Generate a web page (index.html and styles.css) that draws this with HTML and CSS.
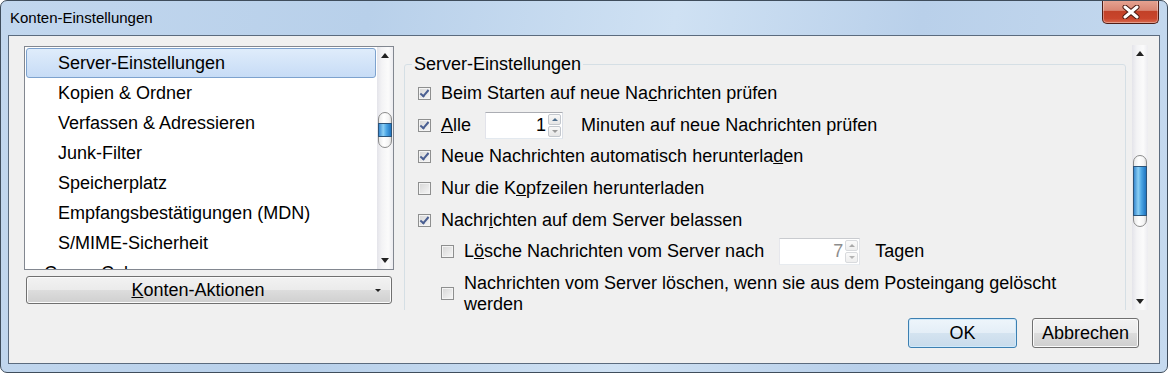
FILE: index.html
```html
<!DOCTYPE html>
<html lang="de">
<head>
  <meta charset="UTF-8" />
  <title>Konten-Einstellungen</title>
  <link rel="stylesheet" href="styles.css">
</head>
<body>
  <div class="window">
    <div class="titlebar">
      <span class="title">Konten-Einstellungen</span>
      <div class="close-btn">
        <svg width="22" height="14" viewBox="0 0 22 14">
          <path d="M5 2 L17 12 M17 2 L5 12" stroke="#4a1a12" stroke-width="5" stroke-linecap="round"/>
          <path d="M5 2 L17 12 M17 2 L5 12" stroke="#fff" stroke-width="3" stroke-linecap="round"/>
        </svg>
      </div>
    </div>

    <div class="client">
      <div class="left-col">
        <div class="tree">
          <ul class="tree-items">
            <li class="item selected">Server-Einstellungen</li>
            <li class="item">Kopien &amp; Ordner</li>
            <li class="item">Verfassen &amp; Adressieren</li>
            <li class="item">Junk-Filter</li>
            <li class="item">Speicherplatz</li>
            <li class="item">Empfangsbestätigungen (MDN)</li>
            <li class="item">S/MIME-Sicherheit</li>
            <li class="item account"><span class="twisty"></span>Conny Coburger</li>
          </ul>
          <div class="vscroll">
            <span class="arrow up"></span>
            <div class="track">
              <div class="thumb thumb-tree"><div class="grip"></div></div>
            </div>
            <span class="arrow down"></span>
          </div>
        </div>
        <button class="menu-btn"><span class="menu-label"><u>K</u>onten-Aktionen</span><span class="menu-arrow"></span></button>
      </div>

      <div class="right-col">
        <div class="pane">
          <div class="pane-content">
            <fieldset class="group">
              <legend>Server-Einstellungen</legend>
              <div class="row">
                <span class="check on"></span>
                <span class="label">Beim Starten auf neue Na<u>c</u>hrichten prüfen</span>
              </div>
              <div class="row">
                <span class="check on"></span>
                <span class="label"><u>A</u>lle</span>
                <span class="spin spin-minutes"><span class="spin-val">1</span><span class="spin-btns"><span class="spin-up"></span><span class="spin-down"></span></span></span>
                <span class="label">Minuten auf neue Nachrichten prüfen</span>
              </div>
              <div class="row">
                <span class="check on"></span>
                <span class="label">Neue Nachrichten automatisch herunterla<u>d</u>en</span>
              </div>
              <div class="row">
                <span class="check"></span>
                <span class="label">Nur die K<u>o</u>pfzeilen herunterladen</span>
              </div>
              <div class="row">
                <span class="check on"></span>
                <span class="label">Nachr<u>i</u>chten auf dem Server belassen</span>
              </div>
              <div class="row sub">
                <span class="check"></span>
                <span class="label">L<u>ö</u>sche Nachrichten vom Server nach</span>
                <span class="spin spin-days disabled"><span class="spin-val">7</span><span class="spin-btns"><span class="spin-up"></span><span class="spin-down"></span></span></span>
                <span class="label">Tagen</span>
              </div>
              <div class="row sub multi">
                <span class="check"></span>
                <span class="label wrap">Nachrichten vom Server löschen, wenn sie aus dem Posteingang gelöscht werden</span>
              </div>
            </fieldset>
          </div>
          <div class="vscroll">
            <span class="arrow up"></span>
            <div class="track">
              <div class="thumb thumb-pane"><div class="grip"></div></div>
            </div>
            <span class="arrow down"></span>
          </div>
        </div>
        <div class="dialog-buttons">
          <button class="btn default">OK</button>
          <button class="btn">Abbrechen</button>
        </div>
      </div>
    </div>
  </div>
</body>
</html>
```

FILE: styles.css
```css
* {
  box-sizing: border-box;
}

body {
  margin: 0;
  background: #fff;
  font-family: "Liberation Sans", Arial, sans-serif;
  color: #000;
}

.window {
  width: 1168px;
  height: 373px;
  border: 1px solid #3f4d5c;
  border-radius: 7px;
  background: linear-gradient(100deg, #c2d7ee 0%, #b8d0ea 30%, #cfe1f3 55%, #b9d0ea 75%, #c6daef 100%);
  display: flex;
  flex-direction: column;
  overflow: hidden;
}

.titlebar {
  height: 34px;
  flex-shrink: 0;
  display: flex;
  justify-content: space-between;
  align-items: flex-start;
  padding: 0 8px 0 9px;
}

.title {
  font-size: 15px;
  line-height: 34px;
}

.close-btn {
  width: 57px;
  height: 24px;
  margin-top: -1px;
  border: 1px solid #4f1d15;
  border-top: none;
  border-radius: 0 0 5px 5px;
  background: linear-gradient(#e6a594 0%, #d98673 45%, #c24128 50%, #c9452c 80%, #d86a4f 100%);
  box-shadow: inset 0 0 0 1px rgba(255, 255, 255, 0.35);
  display: flex;
  align-items: center;
  justify-content: center;
}

.client {
  flex: 1;
  margin: 0 7px 8px;
  border: 1px solid #5b6b7e;
  background: #f0f0f0;
  display: flex;
  padding: 9px 11px 0 15px;
  font-size: 18px;
}

/* left column */
.left-col {
  width: 370px;
  margin-top: 1px;
  display: flex;
  flex-direction: column;
}

.tree {
  height: 224px;
  border: 1px solid #828790;
  background: #fff;
  display: flex;
}

.tree-items {
  flex: 1;
  list-style: none;
  margin: 0;
  padding: 1px;
  overflow: hidden;
}

.item {
  height: 30px;
  line-height: 28px;
  border: 1px solid transparent;
  border-radius: 3px;
  padding-left: 31px;
  white-space: nowrap;
}

.item.selected {
  background: linear-gradient(#dfecfb, #c7dcf6);
  border-color: #7da2ce;
}

.item.account {
  padding-left: 9px;
  display: flex;
  align-items: center;
  gap: 4px;
}

.twisty {
  width: 4px;
  height: 4px;
  border-right: 1px solid #555;
  border-bottom: 1px solid #555;
  transform: rotate(-45deg);
}

.menu-btn {
  margin: 6px 2px 0;
  height: 28px;
  border: 1px solid #707070;
  border-radius: 3px;
  background: linear-gradient(#f2f2f2 0%, #ebebeb 49%, #dddddd 50%, #cfcfcf 100%);
  box-shadow: inset 0 0 0 1px #fbfbfb;
  font: inherit;
  display: flex;
  align-items: center;
  padding: 0;
}

.menu-label {
  flex: 1;
  text-align: center;
}

.menu-arrow {
  width: 18px;
  margin-right: 4px;
  display: flex;
  justify-content: center;
}

.menu-arrow::after {
  content: "";
  border-left: 3px solid transparent;
  border-right: 3px solid transparent;
  border-top: 3px solid #222;
}

/* scrollbars */
.vscroll {
  width: 16px;
  display: flex;
  flex-direction: column;
  background: linear-gradient(to right, #e4e4ea, #f3f3f5 30%, #fbfbfb 70%, #ececf0);
}

.arrow {
  height: 17px;
  display: flex;
  align-items: center;
  justify-content: center;
}

.arrow.up::after {
  content: "";
  border-left: 4px solid transparent;
  border-right: 4px solid transparent;
  border-bottom: 5px solid #222;
}

.arrow.down::after {
  content: "";
  border-left: 4px solid transparent;
  border-right: 4px solid transparent;
  border-top: 5px solid #222;
}

.track {
  flex: 1;
}

.thumb {
  margin: 0 1px;
  border: 1px solid #8b8b8b;
  border-radius: 7px;
  background: linear-gradient(to right, #e9e9e9, #ffffff 40%, #f4f4f4 80%, #dedede);
  display: flex;
  flex-direction: column;
  justify-content: center;
}

.thumb-tree {
  margin-top: 48px;
  height: 36px;
}

.thumb-pane {
  margin-top: 93px;
  height: 72px;
}

.grip {
  margin: 0 -1px;
  border: 1px solid #2c5479;
  background: linear-gradient(to right, #3a8ad0, #8ccff4 35%, #4ea8e6 60%, #1f74c0);
}

.thumb-tree .grip {
  height: 14px;
}

.thumb-pane .grip {
  height: 50px;
}

/* right column */
.right-col {
  flex: 1;
  margin-left: 10px;
  display: flex;
  flex-direction: column;
}

.pane {
  height: 265px;
  display: flex;
}

.pane-content {
  flex: 1;
  overflow: hidden;
}

.group {
  margin: 9px 6px 0 0;
  padding: 4px 0 0 13px;
  min-width: 0;
  height: 320px;
  border: 1px solid #d5dfe5;
  border-radius: 3px;
}

.group legend {
  padding: 0 2px;
  margin-left: -6px;
  line-height: 20px;
}

.row {
  display: flex;
  align-items: center;
  height: 31.6px;
  gap: 10px;
  white-space: nowrap;
}

.row.sub {
  padding-left: 23px;
}

.row.multi {
  height: auto;
  padding-top: 5px;
}

.label {
  line-height: 21px;
}

.label.wrap {
  white-space: normal;
  width: 620px;
}

.check {
  width: 13px;
  height: 13px;
  flex-shrink: 0;
  border: 1px solid #8e8f8f;
  background: linear-gradient(135deg, #d6d6d6, #f7f7f7);
  box-shadow: inset 0 0 0 1px #f4f4f4;
  position: relative;
}

.check.on::after {
  content: "";
  position: absolute;
  left: 3px;
  top: 0px;
  width: 3px;
  height: 7px;
  border-right: 2px solid #4a5f92;
  border-bottom: 2px solid #4a5f92;
  transform: rotate(40deg);
}

.spin {
  display: flex;
  height: 27px;
  padding: 1px;
  border: 1px solid;
  border-color: #abadb3 #dbdfe6 #e3e9ef #e2e3ea;
  background: #fff;
}

.spin-minutes {
  width: 78px;
  margin: 0 8px 0 4px;
}

.spin-days {
  width: 81px;
  margin: 0 5px;
}

.spin-val {
  flex: 1;
  text-align: right;
  line-height: 23px;
  padding-right: 2px;
}

.spin-btns {
  width: 13px;
  display: flex;
  flex-direction: column;
  gap: 1px;
}

.spin-btns span {
  flex: 1;
  border: 1px solid #c3c7cd;
  border-radius: 2px;
  background: linear-gradient(#f8f8f8, #e6e6e6);
  display: flex;
  align-items: center;
  justify-content: center;
}

.spin-up::after {
  content: "";
  border-left: 3px solid transparent;
  border-right: 3px solid transparent;
  border-bottom: 3px solid #4d6d8c;
}

.spin-down::after {
  content: "";
  border-left: 3px solid transparent;
  border-right: 3px solid transparent;
  border-top: 3px solid #9a9a9a;
}

.spin.disabled {
  border-color: #c9cbcf #e2e4e8 #e7ebef #e6e7ec;
}

.spin.disabled .spin-val {
  color: #8d8d8d;
}

.spin.disabled .spin-btns span {
  border-color: #d8dadd;
  background: linear-gradient(#fafafa, #eeeeee);
}

.spin.disabled .spin-up::after {
  border-bottom-color: #a9a9a9;
}

.spin.disabled .spin-down::after {
  border-top-color: #b4b4b4;
}

.dialog-buttons {
  margin-top: 8px;
  padding-right: 9px;
  display: flex;
  justify-content: flex-end;
  gap: 15px;
}

.btn {
  height: 30px;
  width: 107px;
  border: 1px solid #707070;
  border-radius: 3px;
  background: linear-gradient(#f2f2f2 0%, #ebebeb 49%, #dddddd 50%, #cfcfcf 100%);
  box-shadow: inset 0 0 0 1px #fbfbfb;
  font: inherit;
  padding: 0;
}

.btn.default {
  width: 109px;
  border-color: #3c7fb1;
  background: linear-gradient(#eef5fb 0%, #e4eef7 49%, #d4e3f0 50%, #c8dbeb 100%);
  box-shadow: inset 0 0 0 1px #cfe9fb;
}
```
